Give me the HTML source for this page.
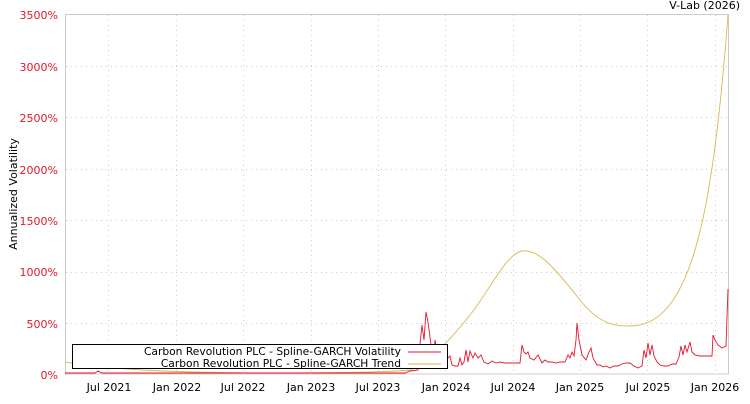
<!DOCTYPE html>
<html><head><style>
body{margin:0;background:#fff;width:750px;height:400px;overflow:hidden;font-family:"DejaVu Sans","Liberation Sans",sans-serif}
</style></head><body>
<svg width="750" height="400" xmlns="http://www.w3.org/2000/svg" font-family="DejaVu Sans, Liberation Sans, sans-serif" font-size="11">
<rect x="65.5" y="14.5" width="663" height="359.5" fill="#fff" stroke="#ccc"/>
<g stroke="#ccc" stroke-dasharray="1,4" stroke-width="1">
<path d="M66 66.5H728M66 117.5H728M66 169.5H728M66 220.5H728M66 272.5H728M66 323.5H728"/>
<path d="M108.5 15V373M176.5 15V373M243.5 15V373M311.5 15V373M378.5 15V373M445.5 15V373M513.5 15V373M580.5 15V373M647.5 15V373M715.5 15V373"/>
</g>
<g fill="#e0182d" text-anchor="end">
<text x="58" y="19">3500%</text><text x="58" y="71">3000%</text><text x="58" y="122">2500%</text>
<text x="58" y="174">2000%</text><text x="58" y="225">1500%</text><text x="58" y="276">1000%</text>
<text x="58" y="328">500%</text><text x="58" y="379">0%</text>
</g>
<g fill="#000" text-anchor="middle">
<text x="109" y="391">Jul 2021</text><text x="177" y="391">Jan 2022</text><text x="243" y="391">Jul 2022</text>
<text x="311" y="391">Jan 2023</text><text x="378" y="391">Jul 2023</text><text x="446" y="391">Jan 2024</text>
<text x="513" y="391">Jul 2024</text><text x="580" y="391">Jan 2025</text><text x="648" y="391">Jul 2025</text>
<text x="715" y="391">Jan 2026</text>
</g>
<text x="740" y="9" text-anchor="end">V-Lab (2026)</text>
<text transform="translate(17 194) rotate(-90)" text-anchor="middle">Annualized Volatility</text>
<path fill="none" stroke="#d9b84a" stroke-width="0.9" d="M65 362 C100 368 150 372 250 373 C330 373 390 372 410 370 C430 362 450 340 470 315 C490 290 505 255 522 251 C540 248 560 275 580 300 C600 325 615 326 630 326 C660 326 680 300 695 250 C710 200 720 120 728 15"/>
<path fill="none" stroke="#e0182d" stroke-width="0.9" d="M65 373 L95 373 L98 371 L102 373 L200 373 L300 373 L405 373 L410 371 L418 370 L420 344 L422 325 L424 340 L426 312 L428 322 L431 345 L433 365 L435 340 L438 355 L441 348 L444 360 L448 358 L450 356 L452 365 L455 366 L458 366 L460 358 L462 365 L464 362 L466 350 L468 362 L470 351 L473 358 L475 353 L478 358 L481 355 L484 362 L488 364 L492 361 L496 363 L500 362 L505 363 L510 363 L515 363 L520 363 L522 345 L524 352 L526 354 L528 352 L530 358 L534 360 L538 355 L542 363 L545 360 L548 362 L552 362 L556 363 L560 362 L565 362 L568 355 L570 358 L572 352 L574 356 L576 340 L577 323 L579 340 L582 355 L586 360 L589 352 L591 348 L593 358 L597 365 L600 365 L603 367 L606 366 L610 368 L614 366 L618 366 L622 364 L626 363 L630 363 L634 366 L638 368 L642 366 L644 350 L646 358 L648 343 L650 355 L652 345 L654 356 L657 362 L660 365 L664 366 L668 366 L672 364 L676 364 L679 357 L681 346 L683 355 L685 345 L687 352 L690 342 L692 352 L695 355 L700 356 L705 356 L712 356 L713 335 L715 340 L718 345 L722 348 L726 346 L728 289"/>
<rect x="72.5" y="344.5" width="375" height="24" fill="#fff" stroke="#000"/>
<text x="401" y="355" text-anchor="end" font-size="10.7">Carbon Revolution PLC - Spline-GARCH Volatility</text>
<text x="401" y="367" text-anchor="end" font-size="10.7">Carbon Revolution PLC - Spline-GARCH Trend</text>
<path d="M408 352H441" stroke="#e0182d"/>
<path d="M408 364H441" stroke="#d9b84a"/>
</svg>
</body></html>
